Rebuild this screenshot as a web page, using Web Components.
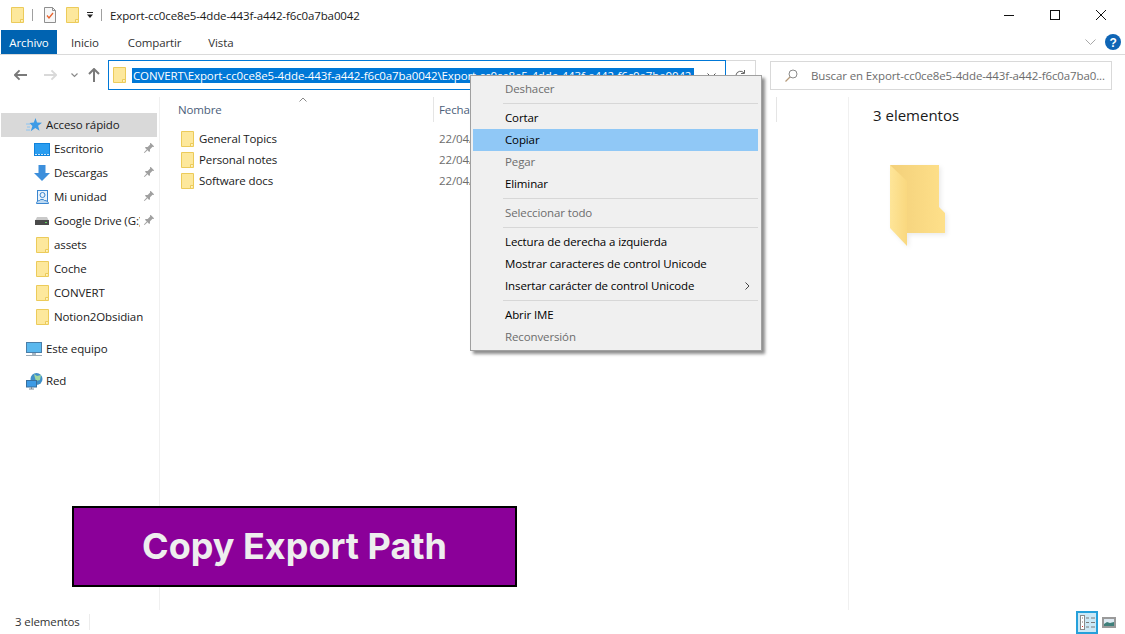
<!DOCTYPE html>
<html lang="es">
<head>
<meta charset="utf-8">
<title>Export-cc0ce8e5-4dde-443f-a442-f6c0a7ba0042</title>
<style>
html, body { margin: 0; padding: 0; background: #fff; }
body { font: 11.5px "Open Sans", "Noto Sans", sans-serif; letter-spacing: -0.12px; color: #1a1a1a; }
</style>
</head>
<body>
<explorer-window>
	<title-bar caption="Export-cc0ce8e5-4dde-443f-a442-f6c0a7ba0042"></title-bar>
	<ribbon-tabs></ribbon-tabs>
	<address-row></address-row>
	<div slot="nav">
		<nav-item label="Acceso rápido" icon="star" level="0" selected></nav-item>
		<nav-item label="Escritorio" icon="desktop" level="1" pinned></nav-item>
		<nav-item label="Descargas" icon="download" level="1" pinned></nav-item>
		<nav-item label="Mi unidad" icon="drive" level="1" pinned></nav-item>
		<nav-item label="Google Drive (G:)" icon="disk" level="1" pinned></nav-item>
		<nav-item label="assets" icon="folder" level="1"></nav-item>
		<nav-item label="Coche" icon="folder" level="1"></nav-item>
		<nav-item label="CONVERT" icon="folder" level="1"></nav-item>
		<nav-item label="Notion2Obsidian" icon="folder" level="1"></nav-item>
		<nav-item label="Este equipo" icon="pc" level="0" gap></nav-item>
		<nav-item label="Red" icon="net" level="0" gap></nav-item>
	</div>
	<file-list slot="files">
		<file-row name="General Topics" date="22/04/2021 12:10"></file-row>
		<file-row name="Personal notes" date="22/04/2021 12:10"></file-row>
		<file-row name="Software docs" date="22/04/2021 12:10"></file-row>
	</file-list>
	<details-pane slot="details"></details-pane>
	<status-bar slot="status"></status-bar>
	<context-menu slot="overlay"></context-menu>
	<promo-banner slot="overlay">Copy Export Path</promo-banner>
</explorer-window>

<script>
const FONT = '"Open Sans", "Noto Sans", sans-serif';
const FOLDER_SVG = `<svg width="13" height="16" viewBox="0 0 13 16"><path d="M.5.5h12v15H.5z" fill="#fde89c" stroke="#eccb5a"/><path d="M9.500 15.500v-3h3" fill="#fff3c4" stroke="#eccb5a"/></svg>`;

const ICONS = {
	folder: FOLDER_SVG,
	star: `<svg width="16" height="15" viewBox="0 0 16 15"><path d="M9.500 0l1.500 4.500 5 .3-3.900 3 1.400 5-4.200-2.900-4.600 3.300 1.700-5.300L3.500 5l4.300-.5z" fill="#3d9be6"/><path d="M0 6h4M1 9h3M0 12h4" stroke="#8cc4f2"/></svg>`,
	desktop: `<svg width="16" height="13" viewBox="0 0 16 13"><rect width="16" height="13" fill="#0f83dc"/><rect x="1" y="1" width="14" height="10" fill="#2a9df0"/><path d="M1 11.500h14" stroke="#cfe8fa" stroke-dasharray="2 1"/></svg>`,
	download: `<svg width="16" height="16" viewBox="0 0 16 16"><path d="M4.500 0h7v8H16l-8 8-8-8h4.500z" fill="#3d8fdc"/></svg>`,
	drive: `<svg width="13" height="14" viewBox="0 0 13 14"><rect x="1.500" y=".5" width="10" height="13" fill="#eaf3fb" stroke="#3a86d0"/><circle cx="6.500" cy="5" r="2.500" fill="none" stroke="#3a86d0"/><path d="M.5 13.500c0-2 1.500-3 3-3 .5-1.500 4.500-1.500 5 0 2 0 4 1 4 3z" fill="#bcd9f2" stroke="#3a86d0"/></svg>`,
	disk: `<svg width="14" height="8" viewBox="0 0 14 8"><path d="M2 0h10l2 4H0z" fill="#c9c9c9"/><rect y="3" width="14" height="5" fill="#4a4a4a"/><rect x="10" y="5" width="2" height="1" fill="#5fd35f"/></svg>`,
	pc: `<svg width="17" height="15" viewBox="0 0 17 15"><rect x=".5" y=".5" width="15" height="10" fill="#5ab8ee" stroke="#4a7ea8"/><path d="M6 11h4v2H6z" fill="#a9b8c4"/><path d="M0 13.500h16" stroke="#9aa9b5"/></svg>`,
	net: `<svg width="17" height="17" viewBox="0 0 17 17"><circle cx="10.500" cy="6" r="6" fill="#3f8fc8"/><path d="M8 1l3 2 4-1-1 5-4 1-1-3z" fill="#9fd6a0"/><rect x=".5" y="7.500" width="10" height="6.500" fill="#3d9be6" stroke="#386f9c"/><path d="M3 16h5M5.500 14v2" stroke="#7b8a96"/></svg>`
};

class ExplorerWindow extends HTMLElement {
	constructor() {
		super();
		this.attachShadow({mode: 'open'}).innerHTML = `
		<style>
		:host { display: flex; flex-direction: column; position: relative; width: 1125px; height: 634px; overflow: hidden; background: #fff; color: #1a1a1a; font: 11.5px ${FONT}; }
		.body { display: flex; flex: 1; min-height: 0; }
		.nav { width: 159px; flex: none; padding-top: 16px; border-right: 1px solid #f0f0f0; }
		.files { flex: 1; min-width: 0; }
		.details { width: 276px; flex: none; border-left: 1px solid #f0f0f0; }
		</style>
		<slot></slot>
		<div class="body">
			<div class="nav"><slot name="nav"></slot></div>
			<div class="files"><slot name="files"></slot></div>
			<div class="details"><slot name="details"></slot></div>
		</div>
		<slot name="status"></slot>
		<slot name="overlay"></slot>`;
	}
}

class TitleBar extends HTMLElement {
	connectedCallback() {
		this.attachShadow({mode: 'open'}).innerHTML = `
		<style>
		:host { display: flex; align-items: center; height: 30px; padding-left: 11px; padding-right: 1px; flex: none; }
		.sep { width: 1px; height: 12px; background: #a0a0a0; }
		.cap { margin-left: 8px; white-space: nowrap; }
		.controls { margin-left: auto; display: flex; }
		.controls span { width: 46px; height: 30px; display: flex; align-items: center; justify-content: center; }
		svg { display: block; }
		</style>
		${FOLDER_SVG}
		<span class="sep" style="margin-left:8px"></span>
		<svg style="margin-left:11px" width="12" height="16" viewBox="0 0 12 16"><path d="M.5.500h8l3 3v12H.5z" fill="#f7f7f7" stroke="#8f8f8f"/><path d="M8.500.5v3h3" fill="none" stroke="#8f8f8f"/><path d="M3 8.500l2 2.500 4-5" fill="none" stroke="#e8622c" stroke-width="1.300"/></svg>
		<span style="margin-left:10px;display:block">${FOLDER_SVG}</span>
		<svg style="margin-left:8px" width="6" height="6" viewBox="0 0 6 6"><path d="M0 .5h6" stroke="#222"/><path d="M0 2.500h6L3 6z" fill="#222"/></svg>
		<span class="sep" style="margin-left:8px"></span>
		<span class="cap">${this.getAttribute('caption')}</span>
		<div class="controls">
			<span><svg width="10" height="1"><rect width="10" height="1" fill="#111"/></svg></span>
			<span><svg width="10" height="10"><rect x=".5" y=".5" width="9" height="9" fill="none" stroke="#111"/></svg></span>
			<span><svg width="10" height="10"><path d="M0 0l10 10M10 0L0 10" stroke="#111"/></svg></span>
		</div>`;
	}
}

class RibbonTabs extends HTMLElement {
	connectedCallback() {
		this.attachShadow({mode: 'open'}).innerHTML = `
		<style>
		:host { display: flex; align-items: stretch; height: 24px; flex: none; border-bottom: 1px solid #dadada; padding-left: 1px; }
		.file { width: 56px; background: #0063b1; color: #fff; display: flex; align-items: center; justify-content: center; }
		.tab { display: flex; align-items: center; color: #333; padding-top: 1px; }
		.end { margin-left: auto; display: flex; align-items: center; gap: 9px; padding-right: 4px; }
		</style>
		<div class="file">Archivo</div>
		<div class="tab" style="margin-left:14px">Inicio</div>
		<div class="tab" style="margin-left:29px">Compartir</div>
		<div class="tab" style="margin-left:27px">Vista</div>
		<div class="end">
			<svg width="11" height="6" viewBox="0 0 11 6"><path d="M.5.500l5 5 5-5" fill="none" stroke="#a8a8a8"/></svg>
			<svg width="16" height="16" viewBox="0 0 16 16"><circle cx="8" cy="8" r="8" fill="#0f65b5"/><text x="8" y="12.500" text-anchor="middle" font-family="Liberation Sans, sans-serif" font-weight="700" font-size="12" fill="#fff">?</text></svg>
		</div>`;
	}
}

class AddressRow extends HTMLElement {
	connectedCallback() {
		const path = 'CONVERT\\Export-cc0ce8e5-4dde-443f-a442-f6c0a7ba0042\\Export-cc0ce8e5-4dde-443f-a442-f6c0a7ba0042';
		this.attachShadow({mode: 'open'}).innerHTML = `
		<style>
		:host { display: flex; align-items: center; height: 42px; box-sizing: border-box; padding-bottom: 2px; flex: none; }
		svg { display: block; flex: none; }
		.nav { width: 108px; display: flex; align-items: center; flex: none; }
		.box { width: 618px; height: 30px; flex: none; box-sizing: border-box; border: 1px solid #0078d7; display: flex; align-items: center; padding-left: 4px; }
		.sel { margin-left: 6px; padding-left: 1px; width: 561px; overflow: hidden; white-space: nowrap; background: #0078d7; color: #fff; height: 15px; line-height: 15px; flex: none; }
		.chev { margin-left: 13px; }
		.refresh { width: 30px; height: 30px; flex: none; box-sizing: border-box; border: 1px solid #d9d9d9; border-left: 0; display: flex; align-items: center; justify-content: center; }
		.search { margin-left: 14px; width: 342px; height: 29px; flex: none; box-sizing: border-box; border: 1px solid #d9d9d9; display: flex; align-items: center; padding-left: 14px; color: #6d6d6d; white-space: nowrap; }
		.search span { margin-left: 13px; }
		</style>
		<div class="nav">
			<svg style="margin-left:14px" width="13" height="12" viewBox="0 0 14 12"><path d="M6 1L1 6l5 5M1 6h13" fill="none" stroke="#7a7a7a" stroke-width="2"/></svg>
			<svg style="margin-left:17px" width="13" height="12" viewBox="0 0 14 12"><path d="M8 1l5 5-5 5M13 6H0" fill="none" stroke="#d9d9d9" stroke-width="2"/></svg>
			<svg style="margin-left:14px" width="7" height="5" viewBox="0 0 7 5"><path d="M.5.500l3 3 3-3" fill="none" stroke="#8a8a8a" stroke-width="1.200"/></svg>
			<svg style="margin-left:10px" width="12" height="14" viewBox="0 0 12 14"><path d="M1 6l5-5 5 5M6 1v13" fill="none" stroke="#7a7a7a" stroke-width="2"/></svg>
		</div>
		<div class="box">
			${FOLDER_SVG}
			<span class="sel">${path}</span>
			<svg class="chev" width="9" height="5" viewBox="0 0 9 5"><path d="M.5.500l4 4 4-4" fill="none" stroke="#555"/></svg>
		</div>
		<div class="refresh"><svg width="13" height="13" viewBox="0 0 13 13"><path d="M2 6a4.500 4.500 0 0 1 8-2M11 7a4.500 4.500 0 0 1-8 2" fill="none" stroke="#666"/><path d="M10.500 1v3.500H7" fill="none" stroke="#666"/></svg></div>
		<div class="search">
			<svg width="13" height="13" viewBox="0 0 13 13"><circle cx="8" cy="5" r="4" fill="none" stroke="#8a8a8a"/><path d="M5 8l-4.500 4.500" stroke="#b59a7a" stroke-width="1.200"/></svg>
			<span>Buscar en Export-cc0ce8e5-4dde-443f-a442-f6c0a7ba0...</span>
		</div>`;
	}
}

class NavItem extends HTMLElement {
	connectedCallback() {
		const level = this.getAttribute('level');
		const pinned = this.hasAttribute('pinned');
		this.attachShadow({mode: 'open'}).innerHTML = `
		<style>
		:host { display: block; height: 24px; margin-left: 1px; width: 156px; }
		:host([gap]) { margin-top: 8px; }
		:host([selected]) { background: #d9d9d9; }
		.row { height: 100%; display: flex; align-items: center; position: relative; }
		.icon { flex: none; display: flex; align-items: center; justify-content: center; width: 18px; margin-left: ${level == 1 ? 32 : 24}px; }
		.text { margin-left: 3px; padding-bottom: 1px; white-space: nowrap; overflow: hidden; ${pinned ? 'width: 86px;' : ''} }
		.pin { position: absolute; right: 3px; top: 6px; }
		svg { display: block; }
		</style>
		<div class="row">
			<span class="icon">${ICONS[this.getAttribute('icon')]}</span>
			<span class="text">${this.getAttribute('label')}</span>
			${pinned ? `<svg class="pin" width="11" height="11" viewBox="0 0 11 11"><g transform="rotate(45 5.500 5.500)" fill="#a0a0a0"><path d="M3 0h5v1l-.8.5v3.500L8.500 6.500v1h-6v-1L3.800 5V1.500L3 1z"/><path d="M5 7.500h1v4H5z"/></g></svg>` : ''}
		</div>`;
	}
}

class FileList extends HTMLElement {
	constructor() {
		super();
		this.attachShadow({mode: 'open'}).innerHTML = `
		<style>
		:host { display: block; height: 100%; }
		.head { display: flex; height: 25px; color: #4c607a; position: relative; }
		.name { width: 273px; padding-left: 18px; box-sizing: border-box; flex: none; line-height: 25px; }
		.date { width: 343px; flex: none; box-sizing: border-box; padding-left: 5px; border-left: 1px solid #e5e5e5; line-height: 25px; }
		.rest { border-left: 1px solid #e5e5e5; }
		.sort { position: absolute; left: 139px; top: 0; }
		.rows { margin-top: 6px; }
		</style>
		<div class="head">
			<svg class="sort" width="8" height="5" viewBox="0 0 8 5"><path d="M.5 4.500L4 1l3.500 3.500" fill="none" stroke="#888"/></svg>
			<div class="name">Nombre</div><div class="date">Fecha</div><div class="rest"></div>
		</div>
		<div class="rows"><slot></slot></div>`;
	}
}

class FileRow extends HTMLElement {
	connectedCallback() {
		this.attachShadow({mode: 'open'}).innerHTML = `
		<style>
		:host { display: flex; align-items: center; height: 21px; }
		.icon { margin-left: 21px; width: 14px; display: block; flex: none; }
		.name { margin-left: 4px; width: 240px; flex: none; white-space: nowrap; }
		.date { color: #6d6d6d; white-space: nowrap; }
		svg { display: block; }
		</style>
		<span class="icon">${FOLDER_SVG}</span>
		<span class="name">${this.getAttribute('name')}</span>
		<span class="date">${this.getAttribute('date')}</span>`;
	}
}

class DetailsPane extends HTMLElement {
	connectedCallback() {
		this.attachShadow({mode: 'open'}).innerHTML = `
		<style>
		:host { display: block; padding: 8px 0 0 24px; }
		.count { font-size: 15px; line-height: 20px; letter-spacing: 0; }
		svg { display: block; margin: 40px 0 0 17px; filter: drop-shadow(2px 2px 2px rgba(0,0,0,.08)); }
		</style>
		<div class="count">3 elementos</div>
		<svg width="56" height="82" viewBox="0 0 56 82">
			<defs>
				<linearGradient id="back" x1="0" x2="1"><stop offset="0" stop-color="#f3d07a"/><stop offset="1" stop-color="#fee08a"/></linearGradient>
				<linearGradient id="front" x1="0" x2="1"><stop offset="0" stop-color="#fee598"/><stop offset="1" stop-color="#f9d87f"/></linearGradient>
			</defs>
			<path d="M0 0h49v42l6 6v20H17z" fill="url(#back)"/>
			<path d="M0 0l17 16v65L0 63z" fill="url(#front)"/>
		</svg>`;
	}
}

class StatusBar extends HTMLElement {
	connectedCallback() {
		this.attachShadow({mode: 'open'}).innerHTML = `
		<style>
		:host { display: flex; align-items: center; height: 24px; flex: none; padding-left: 15px; color: #333; }
		.count { padding-bottom: 2px; }
		.sep { width: 1px; height: 16px; background: #ececec; margin-left: 9px; }
		.views { margin-left: auto; display: flex; align-items: center; gap: 4px; padding-right: 9px; }
		.on { width: 22px; height: 23px; box-sizing: border-box; border: 2px solid #26a0da; background: #cbe8f6; display: flex; align-items: center; justify-content: center; }
		svg { display: block; }
		</style>
		<span class="count">3 elementos</span><span class="sep"></span>
		<div class="views">
			<div class="on"><svg width="15" height="15" viewBox="0 0 15 15"><rect x=".5" y=".5" width="4" height="14" fill="#fff" stroke="#8a8a8a"/><path d="M2 3h1M2 7h1" stroke="#777"/><path d="M2 11.500h1" stroke="#d33"/><path d="M6 3h3M11 3h4M6 7.500h3M11 7.500h4M6 12h3M11 12h4" stroke="#7a7a7a"/></svg></div>
			<svg width="14" height="11" viewBox="0 0 14 11"><rect x="1" y="1" width="12" height="9" fill="#dfeaf2" stroke="#9a9a9a" stroke-width="2"/><path d="M2 7l3-2 3 1 4-1v4H2z" fill="#3f7f7a"/></svg>
		</div>`;
	}
}

class ContextMenu extends HTMLElement {
	connectedCallback() {
		const groups = [
			[['Deshacer', 'off']],
			[['Cortar'], ['Copiar', 'hot'], ['Pegar', 'off'], ['Eliminar']],
			[['Seleccionar todo', 'off']],
			[['Lectura de derecha a izquierda'], ['Mostrar caracteres de control Unicode'], ['Insertar carácter de control Unicode', 'sub']],
			[['Abrir IME'], ['Reconversión', 'off']]
		];
		const html = groups.map(g => g.map(([label, kind]) =>
			`<div class="item ${kind || ''}">${label}${kind == 'sub' ? '<svg width="5" height="8" viewBox="0 0 5 8"><path d="M.5.500L4 4 .5 7.500" fill="none" stroke="#444"/></svg>' : ''}</div>`
		).join('')).join('<div class="sep"></div>');
		this.attachShadow({mode: 'open'}).innerHTML = `
		<style>
		:host { position: absolute; left: 470px; top: 75px; width: 292px; height: 276px; box-sizing: border-box; background: #f0f0f0; border: 1px solid #a0a0a0; box-shadow: 3px 3px 3px rgba(0,0,0,.45); padding: 2px 3px 0 2px; color: #000; }
		.item { height: 22px; line-height: 21px; padding-left: 32px; position: relative; white-space: nowrap; }
		.off { color: #6d6d6d; }
		.hot { background: #90c8f6; }
		.item svg { position: absolute; right: 8px; top: 7px; }
		.sep { height: 1px; margin: 3px 0 3px 30px; background: #d7d7d7; }
		</style>
		${html}`;
	}
}

class PromoBanner extends HTMLElement {
	constructor() {
		super();
		this.attachShadow({mode: 'open'}).innerHTML = `
		<style>
		:host { position: absolute; left: 72px; top: 506px; width: 445px; height: 81px; box-sizing: border-box; border: 2px solid #000; padding-bottom: 2px; background: #8b0099; color: #eeeeee; font: 700 36px Inter, Roboto, sans-serif; letter-spacing: 0; display: flex; align-items: center; justify-content: center; white-space: nowrap; }
		</style>
		<slot></slot>`;
	}
}

customElements.define('explorer-window', ExplorerWindow);
customElements.define('title-bar', TitleBar);
customElements.define('ribbon-tabs', RibbonTabs);
customElements.define('address-row', AddressRow);
customElements.define('nav-item', NavItem);
customElements.define('file-list', FileList);
customElements.define('file-row', FileRow);
customElements.define('details-pane', DetailsPane);
customElements.define('status-bar', StatusBar);
customElements.define('context-menu', ContextMenu);
customElements.define('promo-banner', PromoBanner);
</script>
</body>
</html>
